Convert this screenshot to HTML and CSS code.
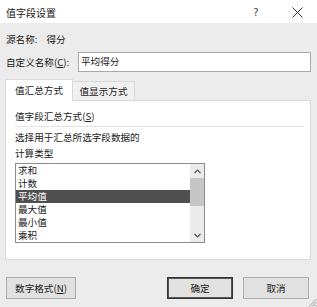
FILE: index.html
```html
<!DOCTYPE html>
<html lang="zh">
<head>
<meta charset="utf-8">
<link rel="stylesheet" href="styles.css">
</head>
<body>
<div class="dialog">
  <div class="titlebar">
    <span class="title">值字段设置</span>
    <span class="help">?</span>
    <span class="close">
      <svg width="11" height="11" viewBox="0 0 11 11"><path d="M0.5 0.5 L10.5 10.5 M10.5 0.5 L0.5 10.5" stroke="#333" stroke-width="1" fill="none"/></svg>
    </span>
  </div>
  <div class="content">
    <div class="source">源名称:<span class="source-value">得分</span></div>
    <div class="custom">
      <span class="label">自定义名称(<u>C</u>):</span>
      <div class="input">平均得分</div>
    </div>
    <div class="tabs">
      <div class="tab active">值汇总方式</div>
      <div class="tab">值显示方式</div>
    </div>
    <div class="panel">
      <div class="heading">值字段汇总方式(<u>S</u>)</div>
      <div class="desc">选择用于汇总所选字段数据的<br>计算类型</div>
      <div class="listbox">
        <div class="items">
          <div class="item">求和</div>
          <div class="item">计数</div>
          <div class="item selected">平均值</div>
          <div class="item">最大值</div>
          <div class="item">最小值</div>
          <div class="item">乘积</div>
        </div>
        <div class="scrollbar">
          <div class="arrow">
            <svg width="7" height="5" viewBox="0 0 7 5"><path d="M0.5 4 L3.5 1 L6.5 4" stroke="#555" stroke-width="1.2" fill="none"/></svg>
          </div>
          <div class="thumb"></div>
          <div class="track"></div>
          <div class="arrow">
            <svg width="7" height="5" viewBox="0 0 7 5"><path d="M0.5 1 L3.5 4 L6.5 1" stroke="#555" stroke-width="1.2" fill="none"/></svg>
          </div>
        </div>
      </div>
    </div>
    <div class="buttons">
      <div class="btn">数字格式(<u>N</u>)</div>
      <div class="spacer"></div>
      <div class="btn default">确定</div>
      <div class="btn">取消</div>
    </div>
  </div>
  <svg class="grip" width="9" height="9" viewBox="0 0 9 9"><path d="M8.5 1 L1 8.5 M8.5 4 L4 8.5 M8.5 7 L7 8.5" stroke="#999" stroke-width="1" fill="none"/></svg>
</div>
</body>
</html>
```
FILE: styles.css
```css
html, body {
  margin: 0;
  padding: 0;
}
body {
  width: 317px;
  height: 307px;
  overflow: hidden;
  font-family: "Noto Sans CJK SC", "Noto Sans", sans-serif;
  font-size: 9.6px;
  color: #1a1a1a;
  background: #ececec;
}
.dialog {
  position: relative;
  width: 317px;
  height: 307px;
  background: #ececec;
}
.titlebar {
  height: 23px;
  background: #fff;
  display: flex;
  align-items: center;
}
.title {
  padding-left: 6px;
  padding-top: 2px;
  font-size: 10px;
  flex: 1;
}
.help {
  width: 10px;
  text-align: center;
  margin-right: 31px;
  font-family: "DejaVu Sans", sans-serif;
  font-size: 10px;
  color: #444;
  padding-top: 2px;
}
.close {
  display: flex;
  margin-right: 14px;
  padding-top: 2px;
}
.content {
  padding: 0 6px 0 5px;
}
.source {
  margin-top: 9px;
  line-height: 14px;
  padding-left: 1px;
}
.source-value {
  margin-left: 9px;
}
.custom {
  margin-top: 6px;
  display: flex;
  align-items: center;
  height: 20px;
}
.label {
  width: 72px;
  padding-left: 1px;
}
.input {
  flex: 1;
  height: 18px;
  line-height: 17px;
  background: #fff;
  border: 1px solid #a8a8a8;
  padding-left: 2px;
}
.tabs {
  margin-top: 8px;
  display: flex;
  align-items: flex-end;
  height: 20px;
  position: relative;
  z-index: 1;
}
.tab {
  height: 18px;
  line-height: 18px;
  width: 61px;
  text-align: center;
  background: #f0f0f0;
  border: 1px solid #d9d9d9;
  border-bottom: none;
  border-left: none;
}
.tab.active {
  height: 21px;
  line-height: 20px;
  width: 66px;
  background: #fff;
  border-left: 1px solid #d9d9d9;
  margin-bottom: -1px;
}
.panel {
  background: #fff;
  border: 1px solid #d9d9d9;
  padding: 8px 6px 0 9px;
  box-sizing: border-box;
  height: 160px;
}
.heading {
  line-height: 14px;
  padding-bottom: 3px;
  border-bottom: 1px solid #e3e3e3;
}
.desc {
  margin-top: 2px;
  line-height: 16px;
}
.listbox {
  margin-top: 2px;
  width: 188px;
  height: 78px;
  border: 1px solid #8c8c8c;
  display: flex;
}
.items {
  flex: 1;
}
.item {
  height: 13px;
  line-height: 13px;
  padding-left: 2px;
}
.item.selected {
  background: #4f4f4f;
  color: #fff;
}
.scrollbar {
  width: 14px;
  background: #ebebeb;
  display: flex;
  flex-direction: column;
}
.arrow {
  height: 14px;
  display: flex;
  align-items: center;
  justify-content: center;
}
.thumb {
  height: 28px;
  background: #c6c6c6;
}
.track {
  flex: 1;
}
.buttons {
  margin-top: 17px;
  display: flex;
  height: 22px;
}
.btn {
  box-sizing: border-box;
  width: 66px;
  height: 22px;
  line-height: 20px;
  text-align: center;
  background: #e1e1e1;
  border: 1px solid #adadad;
}
.btn:first-child {
  width: 70px;
  margin-left: 1px;
}
.spacer {
  flex: 1;
}
.btn.default {
  border: 1px solid #333;
  box-shadow: inset 0 0 0 1px #555;
  margin-right: 10px;
}
.btn:last-child {
  margin-right: 2px;
}
.grip {
  position: absolute;
  right: 0;
  bottom: 0;
}
```
